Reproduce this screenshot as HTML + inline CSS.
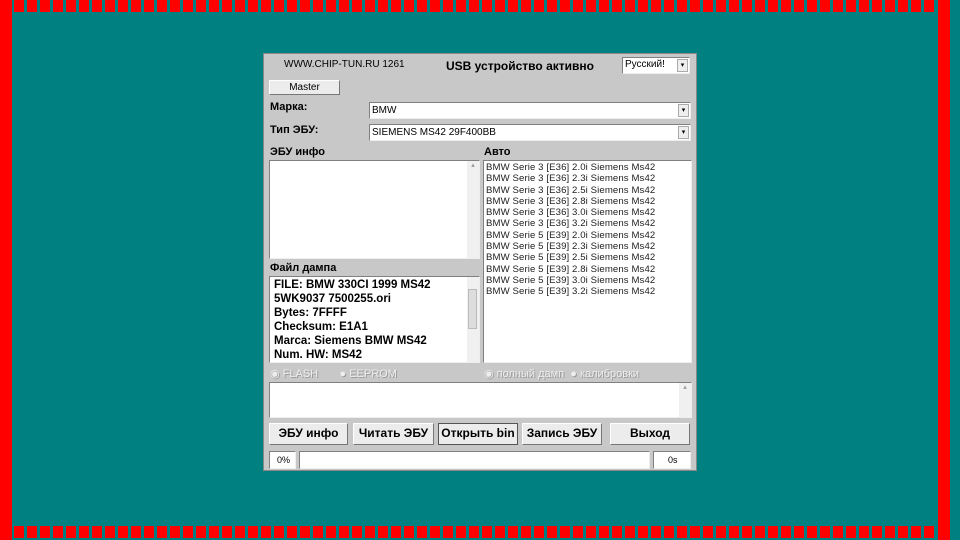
<!DOCTYPE html>
<html><head><meta charset="utf-8"><style>
*{margin:0;padding:0;box-sizing:border-box}
body{width:960px;height:540px;background:#008080;position:relative;overflow:hidden;font-family:"Liberation Sans",sans-serif}
.a{position:absolute}
.rv{background:#f00;position:absolute}
.dash{position:absolute;height:12px;background:repeating-linear-gradient(90deg,#f00 0 10px,transparent 10px 13px)}
.win{left:263px;top:53px;width:434px;height:418px;background:#c8c8c8;border:1px solid #888}
.t{position:absolute;font-size:11px;color:#000;white-space:nowrap}
.b{font-weight:bold}
.box{position:absolute;background:#fff;border:1px solid #808080;border-right-color:#eee;border-bottom-color:#eee;overflow:hidden}
.btn{position:absolute;background:#ececec;border:1px solid #fff;border-right-color:#777;border-bottom-color:#777;font-weight:bold;font-size:12px;text-align:center}
.sb{position:absolute;right:0;top:0;bottom:0;width:12px;background:#f0f0f0;font-size:7px;color:#999;text-align:center}
.dd{position:absolute;right:1px;top:1px;bottom:1px;width:11px;background:#eee;border:1px solid #aaa;font-size:7px;text-align:center;line-height:11px}
.list div{font-size:9.6px;line-height:11.3px;color:#222;letter-spacing:.1px}
.f div{font-size:11.5px;font-weight:bold;line-height:14px}
.g{font-size:11px;color:#eee;text-shadow:1px 1px #999}
</style></head><body>
<div class="rv" style="left:0;top:0;width:12px;height:540px"></div>
<div class="rv" style="left:938px;top:0;width:12px;height:540px"></div>
<div class="dash" style="left:14px;top:0;width:922px"></div>
<div class="dash" style="left:14px;top:526px;width:922px"></div>
<div class="a win">
<div class="t" style="left:20px;top:5px;font-size:10px">WWW.CHIP-TUN.RU 1261</div>
<div class="t b" style="left:182px;top:5px;font-size:12px">USB устройство активно</div>
<div class="box" style="left:358px;top:3px;width:68px;height:17px"><span class="t" style="left:2px;top:1px;font-size:10px">Русский!</span><div class="dd">▾</div></div>
<div class="btn" style="left:5px;top:26px;width:71px;height:15px;font-weight:normal;font-size:10px;line-height:13px">Master</div>
<div class="t b" style="left:6px;top:47px">Марка:</div>
<div class="box" style="left:105px;top:48px;width:322px;height:17px"><span class="t" style="left:2px;top:2px;font-size:10px">BMW</span><div class="dd">▾</div></div>
<div class="t b" style="left:6px;top:70px">Тип ЭБУ:</div>
<div class="box" style="left:105px;top:70px;width:322px;height:17px"><span class="t" style="left:2px;top:2px;font-size:10px">SIEMENS MS42 29F400BB</span><div class="dd">▾</div></div>
<div class="t b" style="left:6px;top:92px">ЭБУ инфо</div>
<div class="t b" style="left:220px;top:92px">Авто</div>
<div class="box" style="left:5px;top:106px;width:211px;height:99px"><div class="sb">▴</div></div>
<div class="box list" style="left:219px;top:106px;width:209px;height:203px;padding:1px 2px">
<div>BMW Serie 3 [E36] 2.0i Siemens Ms42</div><div>BMW Serie 3 [E36] 2.3i Siemens Ms42</div><div>BMW Serie 3 [E36] 2.5i Siemens Ms42</div><div>BMW Serie 3 [E36] 2.8i Siemens Ms42</div><div>BMW Serie 3 [E36] 3.0i Siemens Ms42</div><div>BMW Serie 3 [E36] 3.2i Siemens Ms42</div><div>BMW Serie 5 [E39] 2.0i Siemens Ms42</div><div>BMW Serie 5 [E39] 2.3i Siemens Ms42</div><div>BMW Serie 5 [E39] 2.5i Siemens Ms42</div><div>BMW Serie 5 [E39] 2.8i Siemens Ms42</div><div>BMW Serie 5 [E39] 3.0i Siemens Ms42</div><div>BMW Serie 5 [E39] 3.2i Siemens Ms42</div></div>
<div class="t b" style="left:6px;top:208px">Файл дампа</div>
<div class="box f" style="left:5px;top:222px;width:211px;height:87px;padding:1px 4px">
<div>FILE: BMW 330CI 1999 MS42</div><div>5WK9037 7500255.ori</div><div>Bytes: 7FFFF</div><div>Checksum: E1A1</div><div>Marca: Siemens BMW MS42</div><div>Num. HW: MS42</div>
<div class="sb"><div style="position:absolute;left:1px;top:12px;width:9px;height:40px;background:#ddd;border:1px solid #bbb"></div></div></div>
<div class="t g" style="left:6px;top:313px">◉ FLASH &nbsp;&nbsp;&nbsp;&nbsp;&nbsp; ● EEPROM</div>
<div class="t g" style="left:220px;top:313px">◉ полный дамп &nbsp;● калибровки</div>
<div class="box" style="left:5px;top:328px;width:423px;height:36px"><div class="sb">▴</div></div>
<div class="btn" style="left:5px;top:369px;width:79px;height:22px;line-height:19px">ЭБУ инфо</div>
<div class="btn" style="left:89px;top:369px;width:81px;height:22px;line-height:19px">Читать ЭБУ</div>
<div class="btn" style="left:174px;top:369px;width:80px;height:22px;line-height:19px;border-color:#555">Открыть bin</div>
<div class="btn" style="left:258px;top:369px;width:80px;height:22px;line-height:19px">Запись ЭБУ</div>
<div class="btn" style="left:346px;top:369px;width:80px;height:22px;line-height:19px">Выход</div>
<div class="box" style="left:5px;top:397px;width:27px;height:18px"><span class="t" style="left:7px;top:3px;font-size:9px">0%</span></div>
<div class="box" style="left:35px;top:397px;width:351px;height:18px"></div>
<div class="box" style="left:389px;top:397px;width:38px;height:18px"><span class="t" style="left:14px;top:3px;font-size:9px">0s</span></div>
</div>
</body></html>
